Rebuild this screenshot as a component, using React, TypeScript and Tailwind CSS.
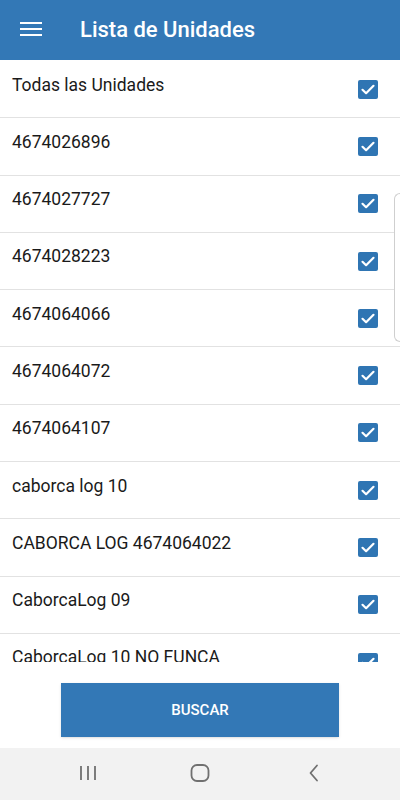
import { useState } from 'react';

const units = [
    'Todas las Unidades',
    '4674026896',
    '4674027727',
    '4674028223',
    '4674064066',
    '4674064072',
    '4674064107',
    'caborca log 10',
    'CABORCA LOG 4674064022',
    'CaborcaLog 09',
    'CaborcaLog 10 NO FUNCA',
];

const CheckBox = ({ checked, onToggle }: { checked: boolean; onToggle: () => void }) => (
    <button
        onClick={onToggle}
        className={`w-[20px] h-[19px] rounded-[2px] flex items-center justify-center ${checked ? 'bg-[#2f75b3]' : 'border-2 border-gray-500 bg-white'}`}
    >
        {checked && (
            <svg viewBox="0 0 20 19" className="w-[20px] h-[19px]" fill="none" stroke="white" strokeWidth="2.2" strokeLinecap="round" strokeLinejoin="round">
                <path d="M4.5 9.8l3.6 3.4 7.4-7.4" />
            </svg>
        )}
    </button>
);

export default function App() {
    const [checked, setChecked] = useState<boolean[]>(units.map(() => true));

    const toggle = (i: number) => {
        setChecked((prev) => prev.map((c, idx) => (idx === i ? !c : c)));
    };

    return (
        <div className="w-[400px] h-[800px] flex flex-col bg-white relative overflow-hidden" style={{ fontFamily: 'Roboto, "Liberation Sans", sans-serif' }}>
            <header className="h-[60px] shrink-0 bg-[#3378b6] flex items-center">
                <div className="w-[80px] pl-[20px] pb-[2px]">
                    <div className="w-[22px] flex flex-col gap-[3.5px]">
                        <span className="block h-[2.5px] bg-white" />
                        <span className="block h-[2.5px] bg-white" />
                        <span className="block h-[2.5px] bg-white" />
                    </div>
                </div>
                <h1 className="text-white text-[22px] font-medium pb-[2px]">Lista de Unidades</h1>
            </header>

            <div className="h-[602px] overflow-hidden shrink-0 pt-[1px]">
                {units.map((u, i) => (
                    <div key={u} className="h-[57.3px] border-b border-[#e2e2e2] flex items-center justify-between pl-[12px] pr-[22px]">
                        <span className="text-[17.5px] text-[#1a1a1a] pb-[9px]">{u}</span>
                        <CheckBox checked={checked[i]} onToggle={() => toggle(i)} />
                    </div>
                ))}
            </div>

            <div className="flex-1 flex justify-center pt-[21px]">
                <button className="w-[278px] h-[54px] bg-[#3378b6] text-white text-[15px] font-medium shadow-sm">
                    BUSCAR
                </button>
            </div>

            <nav className="h-[52px] shrink-0 bg-[#f2f2f2] flex items-center justify-center gap-[88px] pb-[2px]">
                <svg viewBox="0 0 24 24" className="w-[24px] h-[24px]" fill="none" stroke="#707070" strokeWidth="1.8">
                    <path d="M5 5v14M12 5v14M19 5v14" />
                </svg>
                <svg viewBox="0 0 24 24" className="w-[24px] h-[24px]" fill="none" stroke="#707070" strokeWidth="1.8">
                    <rect x="3.5" y="4" width="17" height="16" rx="5.5" />
                </svg>
                <svg viewBox="0 0 24 24" className="w-[24px] h-[24px]" fill="none" stroke="#707070" strokeWidth="1.8" strokeLinecap="round" strokeLinejoin="round">
                    <path d="M17 4.5l-6.5 7.5 6.5 7.5" />
                </svg>
            </nav>

            <div className="absolute right-0 top-[193px] w-[6px] h-[149px] bg-white border border-r-0 border-[#cfcfcf] rounded-l-[6px]" />
        </div>
    );
}
